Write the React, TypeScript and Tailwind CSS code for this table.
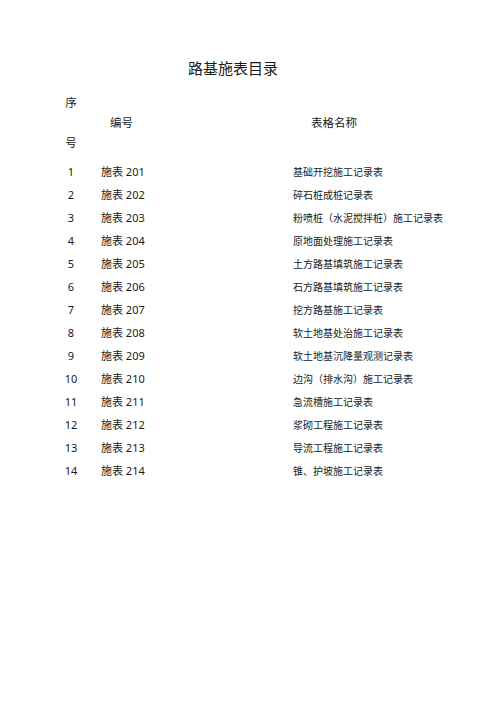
import React from "react";

const ROWS = [
  ["1", "施表 201", "基础开挖施工记录表"],
  ["2", "施表 202", "碎石桩成桩记录表"],
  ["3", "施表 203", "粉喷桩（水泥搅拌桩）施工记录表"],
  ["4", "施表 204", "原地面处理施工记录表"],
  ["5", "施表 205", "土方路基填筑施工记录表"],
  ["6", "施表 206", "石方路基填筑施工记录表"],
  ["7", "施表 207", "挖方路基施工记录表"],
  ["8", "施表 208", "软土地基处治施工记录表"],
  ["9", "施表 209", "软土地基沉降量观测记录表"],
  ["10", "施表 210", "边沟（排水沟）施工记录表"],
  ["11", "施表 211", "急流槽施工记录表"],
  ["12", "施表 212", "浆砌工程施工记录表"],
  ["13", "施表 213", "导流工程施工记录表"],
  ["14", "施表 214", "锥、护坡施工记录表"],
];

export default function App() {
  return (
    <div
      className="w-[496px] h-[702px] bg-white text-[#1a1a1a] overflow-hidden"
      style={{ fontFamily: '"Noto Sans", "Noto Sans CJK SC", sans-serif' }}
    >
      {/* title */}
      <div className="pt-[58px] pl-[188px] h-[78px] text-[15px] leading-[20px]">
        路基施表目录
      </div>

      {/* header */}
      <div className="mt-[15px] pl-[58px] flex text-[11.5px] leading-[20px]">
        <div className="w-[26px] flex flex-col items-center">
          <span>序</span>
          <span className="h-[20px]" />
          <span>号</span>
        </div>
        <div className="w-[227px] pl-[26px] pt-[20px]">编号</div>
        <div className="pt-[20px]">表格名称</div>
      </div>

      {/* rows */}
      <div className="mt-[8px] pl-[58px] flex flex-col">
        {ROWS.map(([no, code, name]) => (
          <div key={no} className="flex items-center h-[23px]">
            <div className="w-[26px] text-center text-[11px]">{no}</div>
            <div className="w-[209px] pl-[17px] text-[11px]">{code}</div>
            <div className="text-[10px]">{name}</div>
          </div>
        ))}
      </div>
    </div>
  );
}
